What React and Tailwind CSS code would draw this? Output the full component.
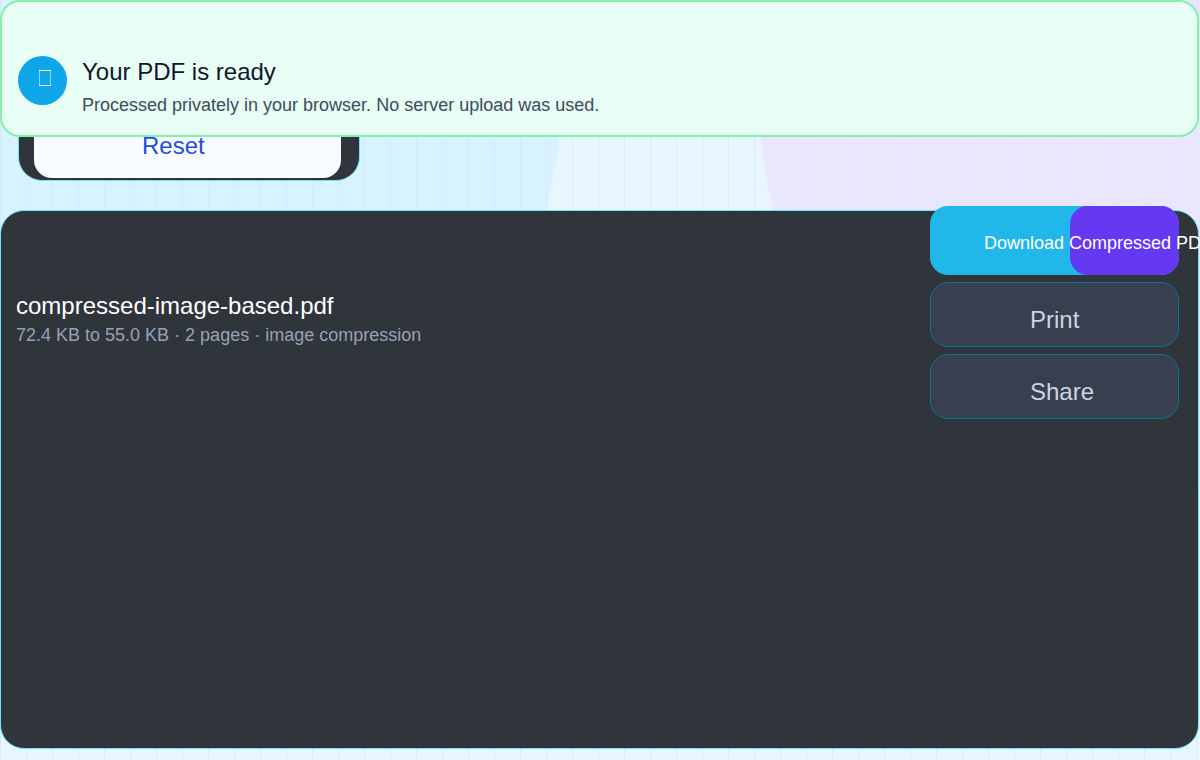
import clsx from 'clsx';

const result = {
  name: 'compressed-image-based.pdf',
  details: '72.4 KB to 55.0 KB · 2 pages · image compression',
};

function Backdrop() {
  return (
    <svg className="absolute inset-0 -z-10 h-full w-full" aria-hidden="true">
      <defs>
        <pattern id="stripes" width="26" height="26" patternUnits="userSpaceOnUse">
          <rect width="1" height="26" fill="#dbe7fe" />
        </pattern>
      </defs>
      <circle cx="220" cy="110" r="340" fill="#d6f3ff" />
      <circle cx="1140" cy="110" r="380" fill="#eae6fe" />
      <rect width="100%" height="100%" fill="url(#stripes)" />
    </svg>
  );
}

function StatusIcon() {
  return (
    <div className="flex h-[49px] w-[49px] shrink-0 items-center justify-center rounded-full bg-[#0ea5e9]">
      <svg width="17" height="17" viewBox="0 0 17 17" className="ml-[6px] -mt-1" shapeRendering="crispEdges" aria-hidden="true">
        <path d="M2 0H14V1H2zM2 15H14V16H2z" fill="#ffffff" />
        <path d="M2 1H3V15H2zM13 1H14V15H13z" fill="#8fd3f5" />
      </svg>
    </div>
  );
}

function ReadyBanner() {
  return (
    <div
      role="status"
      className="absolute inset-x-0 top-0 z-10 mr-px flex h-[137px] items-start rounded-[20px] border-2 border-[#86efac] bg-[#e8fdf3] px-4 pt-[54px]"
    >
      <StatusIcon />
      <div className="ml-[15px]">
        <h2 className="text-2xl leading-8 text-[#0f172a]">Your PDF is ready</h2>
        <p className="mt-1 text-lg leading-[26px] text-[#3f4b60]">
          Processed privately in your browser. No server upload was used.
        </p>
      </div>
    </div>
  );
}

function ActionButton({ children, className }) {
  return (
    <button
      type="button"
      className={clsx(
        'h-[65px] w-full rounded-[18px] border border-[#0e7490] bg-[#384050] pt-[10px] pl-[99px] text-left text-2xl text-[#cbd5e1]',
        className
      )}
    >
      {children}
    </button>
  );
}

function DownloadButton() {
  return (
    <button
      type="button"
      className="relative h-[69px] w-full rounded-[18px] bg-[#22b7ea] pt-1 pl-[54px] text-left text-lg whitespace-nowrap text-white"
    >
      <span className="absolute inset-y-0 right-0 w-[109px] rounded-[18px] bg-[#6538f2]" />
      <span className="relative">Download Compressed PDF</span>
    </button>
  );
}

export default function App() {
  return (
    <main className="relative isolate min-h-screen overflow-hidden bg-[#e8f6ff] pb-[11px] font-['Liberation_Sans',Arial,sans-serif]">
      <Backdrop />
      <ReadyBanner />

      <div className="flex pt-20 pl-[18px]">
        <div className="rounded-b-[24px] border border-[#67e8f9] bg-[#30343b] pr-[18px] pb-[2px] pl-[15px]">
          <button
            type="button"
            className="block h-[97px] w-[307px] rounded-[18px] bg-[#f8fbff] pt-8 pl-[108px] text-left text-2xl text-[#1d4ed8]"
          >
            Reset
          </button>
        </div>
      </div>

      <section className="mt-[29px] mr-px flex min-h-[539px] items-start justify-between rounded-[24px] border border-[#67e8f9] bg-[#30343b] pr-[19px] pl-[15px]">
        <div className="pt-[79px]">
          <h3 className="text-2xl leading-8 text-white">{result.name}</h3>
          <p className="text-lg leading-[26px] text-[#94a3b8]">{result.details}</p>
        </div>
        <div className="-mt-[5px] flex w-[249px] flex-col gap-[7px]">
          <DownloadButton />
          <ActionButton>Print</ActionButton>
          <ActionButton>Share</ActionButton>
        </div>
      </section>
    </main>
  );
}
